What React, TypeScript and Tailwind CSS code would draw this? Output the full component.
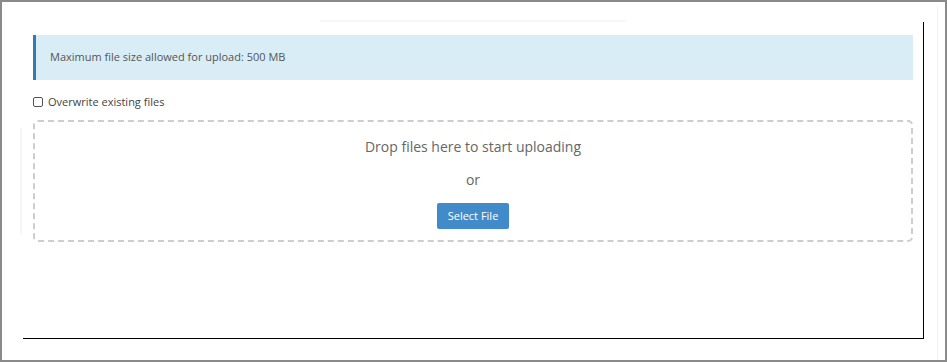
import React from "react";

export default function App() {
  return (
    <div
      className="w-[947px] h-[362px] border-2 border-[#8a8a8a] bg-white box-border relative"
      style={{ fontFamily: '"Open Sans", "Noto Sans", sans-serif' }}
    >
      <div className="absolute left-[318px] top-[18px] w-[306px] h-[2px] bg-[#f7f7f7]" />
      <div className="absolute left-[18px] top-[126px] w-[2px] h-[106px] bg-[#f6f6f6]" />
      <div className="absolute left-[935px] top-[4px] w-[1px] h-[354px] bg-[#f2f2f2]" />
      <div className="ml-[21px] mt-[20px] w-[901px] h-[317px] border-r-[1.5px] border-b-[1.5px] border-black box-border px-[10px] pt-[13px]">
        <div className="h-[45px] bg-[#d9edf7] border-l-[3px] border-[#3a79b0] flex items-center pl-[14px] text-[11px] text-[#555]">
          Maximum file size allowed for upload: 500 MB
        </div>
        <label className="mt-[14px] flex items-center h-[16px] text-[11px] text-[#444]">
          <span className="w-[10px] h-[10px] border border-[#555] rounded-[2px] bg-white inline-block mr-[5px]" />
          Overwrite existing files
        </label>
        <div className="mt-[10px] h-[122px] border-2 border-dashed border-[#cdcdcd] rounded-[5px] flex flex-col items-center">
          <div className="mt-[14px] text-[14px] text-[#666] leading-[22px]">
            Drop files here to start uploading
          </div>
          <div className="mt-[11px] text-[14px] text-[#666] leading-[22px]">or</div>
          <button className="mt-[12px] h-[26px] px-[11px] bg-[#428bca] text-white text-[11px] rounded-[2px]">
            Select File
          </button>
        </div>
      </div>
    </div>
  );
}
